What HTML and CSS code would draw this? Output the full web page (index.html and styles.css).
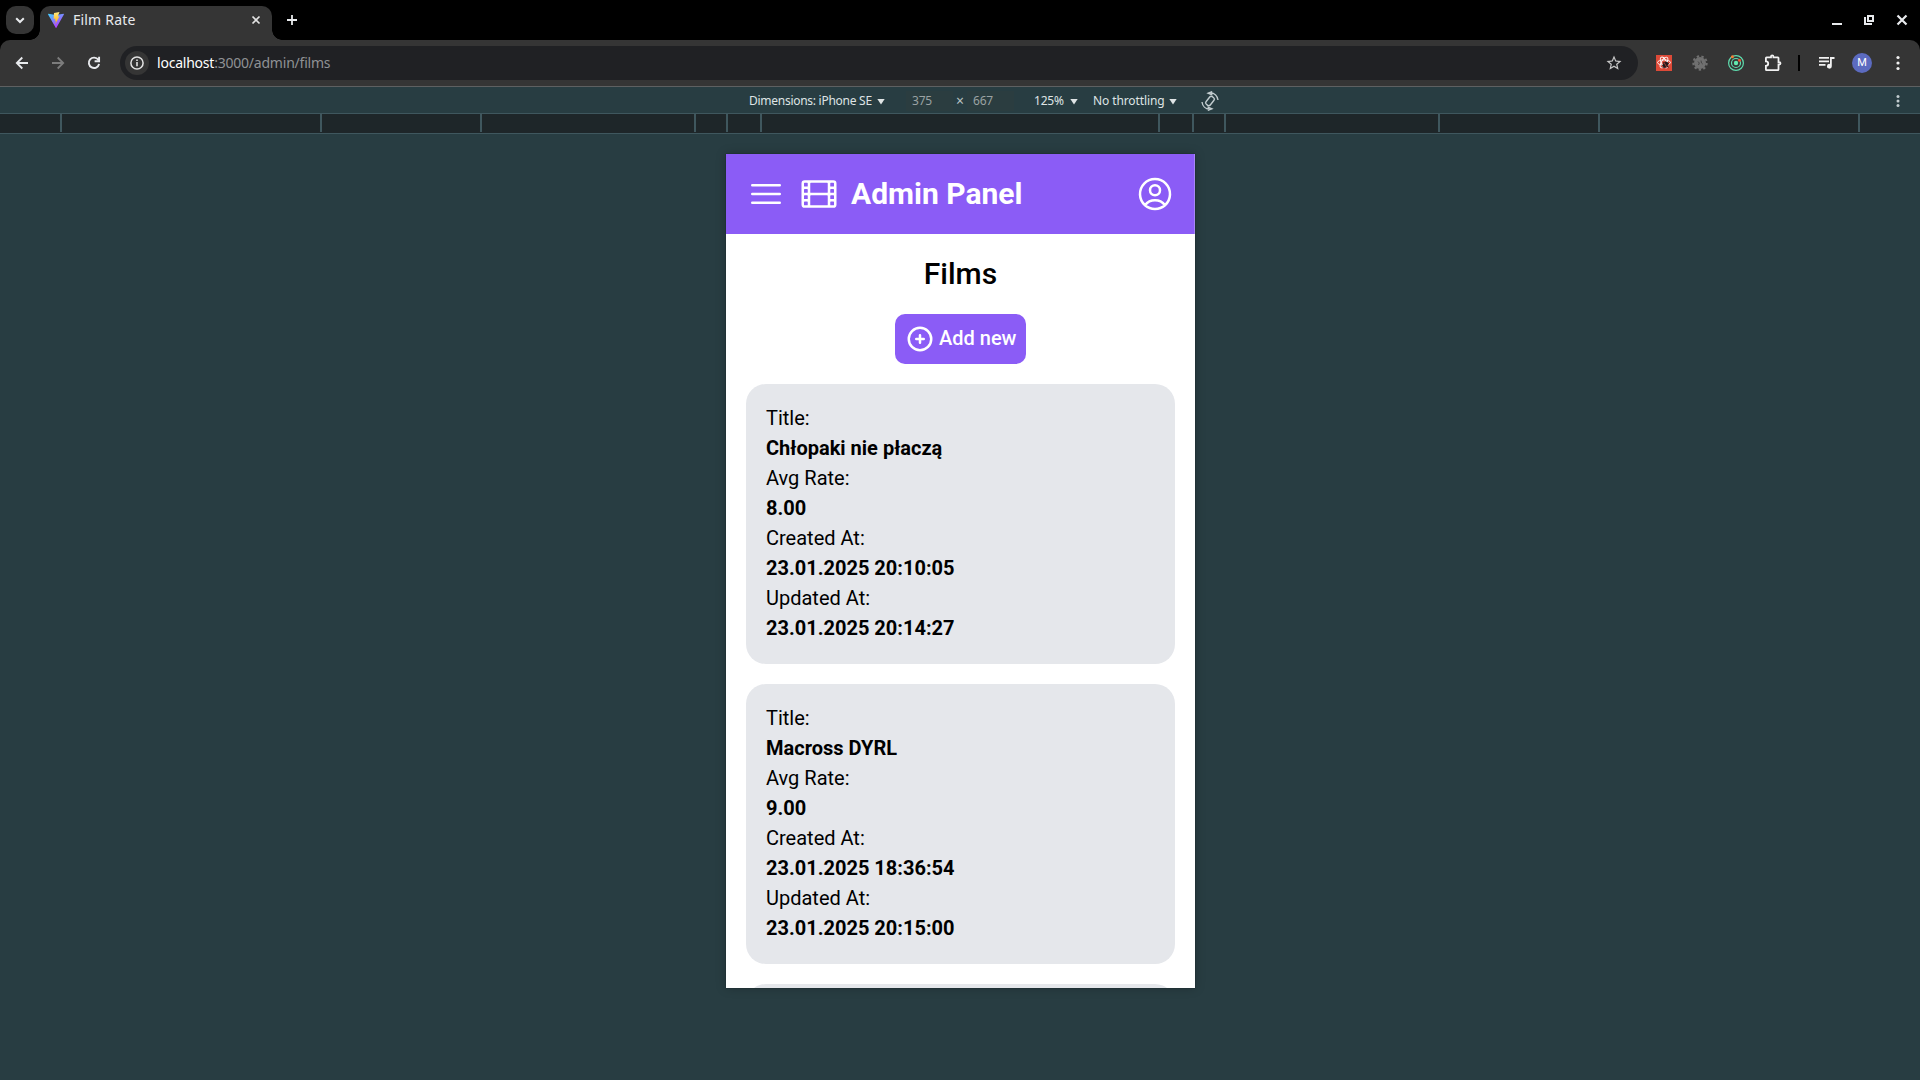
FILE: index.html
```html
<!DOCTYPE html>
<html lang="en">
<head>
<meta charset="utf-8">
<title>Film Rate</title>
<link rel="stylesheet" href="styles.css">
</head>
<body>
<header class="tabstrip">
  <button class="tab-search" aria-label="Search tabs"><svg width="28" height="28" viewBox="0 0 28 28"><path d="M10.2 12.2 14 16l3.800-3.800" fill="none" stroke="#e8eaed" stroke-width="2"/></svg></button>
  <div class="tab">
    <svg class="favicon" width="16" height="16" viewBox="0 0 16 16">
      <defs>
        <linearGradient id="vite" x1="0" y1="0" x2=".6" y2="1"><stop stop-color="#41d1ff"/><stop offset="1" stop-color="#bd34fe"/></linearGradient>
        <linearGradient id="bolt" x1="0" y1="0" x2="0" y2="1"><stop stop-color="#ffea83"/><stop offset="1" stop-color="#ffa800"/></linearGradient>
      </defs>
      <path d="M15.900 2.400 8.400 15.700a.4.4 0 0 1-.7 0L.1 2.400a.4.4 0 0 1 .4-.6L8 3.100l7.500-1.300a.4.400 0 0 1 .4.600z" fill="url(#vite)"/>
      <path d="M11.500 0 6 1.100l-.3 5.800 1.700-.3-.5 2.300 1.100-.3-.7 3.700 4.100-8-1.700.3z" fill="url(#bolt)"/>
    </svg>
    <span class="tab-title">Film Rate</span>
    <svg class="tab-close" width="12" height="12" viewBox="0 0 12 12"><path d="m2.500 2.500 7 7m0-7-7 7" stroke="#e3e3e3" stroke-width="1.700"/></svg>
  </div>
  <svg class="new-tab" width="12" height="12" viewBox="0 0 12 12"><path d="M6 1v10M1 6h10" stroke="#e8eaed" stroke-width="1.800"/></svg>
  <div class="window-controls">
    <svg width="12" height="12" viewBox="0 0 12 12"><path d="M1 10h10" stroke="#e8eaed" stroke-width="2"/></svg>
    <svg width="12" height="12" viewBox="0 0 12 12" fill="none" stroke="#e8eaed" stroke-width="2"><path d="M5 2h5v5H5zM2 3v7h7"/></svg>
    <svg width="12" height="12" viewBox="0 0 12 12"><path d="m1.500 1.500 9 9m0-9-9 9" stroke="#e8eaed" stroke-width="2.200"/></svg>
  </div>
</header>

<div class="toolbar-bed">
<nav class="toolbar">
  <svg class="nav-icon" width="16" height="16" viewBox="0 0 16 16" fill="none" stroke="#e8eaed" stroke-width="1.800"><path d="M14 8H3M8.300 2.500 2.800 8l5.500 5.500"/></svg>
  <svg class="nav-icon" width="16" height="16" viewBox="0 0 16 16" fill="none" stroke="#7c7c7c" stroke-width="1.800"><path d="M2 8h11M7.700 2.500 13.200 8l-5.500 5.500"/></svg>
  <svg class="nav-icon" width="16" height="16" viewBox="0 0 16 16" fill="none" stroke="#e8eaed" stroke-width="1.900"><path d="M12.300 4.800A5.200 5.200 0 1 0 13.100 9M13.100 1.800v4.500H8.600"/></svg>
  <div class="omnibox">
    <span class="site-info"><svg width="16" height="16" viewBox="0 0 16 16" fill="none" stroke="#e3e3e3"><circle cx="8" cy="8" r="6.100" stroke-width="1.500"/><path d="M8 7.100v4.100M8 4.500v1.600" stroke-width="1.600"/></svg></span>
    <span class="url"><b class="host">localhost</b>:3000/admin/films</span>
    <svg class="star" width="18" height="18" viewBox="0 0 24 24" fill="#c7c7c7"><path d="m22 9.240-7.190-.62L12 2 9.190 8.630 2 9.240l5.460 4.730L5.820 21 12 17.270 18.180 21l-1.630-7.030zM12 15.400l-3.760 2.270 1-4.280-3.320-2.880 4.380-.38L12 6.100l1.710 4.040 4.380.38-3.320 2.880 1 4.280z"/></svg>
  </div>
  <div class="extensions">
    <svg width="16" height="16" viewBox="0 0 16 16">
      <path d="M0 0h16v16H0z" fill="#dd4a38"/>
      <g fill="none" stroke="#fff" stroke-width=".9"><ellipse cx="8" cy="7.500" rx="6.500" ry="2.600"/><ellipse cx="8" cy="7.500" rx="6" ry="2.600" transform="rotate(60 8 7.500)"/><ellipse cx="8" cy="7.500" rx="6" ry="2.600" transform="rotate(120 8 7.500)"/></g>
      <ellipse cx="9.500" cy="9.600" rx="2.500" ry="3.200" transform="rotate(35 9.500 9.600)" fill="#271819"/><path d="m6 10.500 7-2M6.500 12.500l6-1M7 7l5.500 5.500" stroke="#271819" stroke-width=".8"/><path d="m8 7.500 2.700 4.500" stroke="#dd4a38" stroke-width=".7"/>
    </svg>
    <svg width="16" height="16" viewBox="0 0 16 16"><circle cx="8" cy="8" r="6" fill="#707070"/><circle cx="8" cy="8" r="6.700" fill="none" stroke="#707070" stroke-width="2" stroke-dasharray="2.400 2.280"/><path d="M6 6.500 7.300 8 6.500 10M9 5.500 9.500 8l1.200 1" fill="none" stroke="#444"/></svg>
    <svg width="16" height="16" viewBox="0 0 16 16"><g fill="none" stroke="#5fdcae" stroke-width="1.200"><circle cx="8" cy="8" r="7.400"/><circle cx="8" cy="8" r="4.500"/></g><circle cx="8" cy="8" r="2.200" fill="#63e8ae"/><circle cx="4.400" cy="1.700" r="1.500" fill="#f47c34"/><circle cx="11.500" cy="5.200" r="1.500" fill="#f0512f"/></svg>
    <svg width="18" height="18" viewBox="0 0 18 18"><path d="M2.500 3.300h4.500V2.500a1.200 1.200 0 0 1 2.400 0v.8h4.500a.6.600 0 0 1 .6.600v4.200h.8a1.200 1.200 0 0 1 0 2.400h-.8v5a.6.600 0 0 1-.6.600H2.500a.6.600 0 0 1-.6-.6v-3.600a2.300 2.300 0 0 0 0-4.600V3.900a.6.600 0 0 1 .6-.6z" fill="none" stroke="#f1f1f1" stroke-width="1.800"/></svg>
  </div>
  <span class="divider"></span>
  <svg class="playlist" width="16" height="14" viewBox="0 0 16 14" fill="#f1f1f1"><path d="M0 1h10v1.700H0zM0 4.500h10v1.700H0zM0 8h6.500v1.700H0zM11 1h4.500v2h-2.700v7.200a2.400 2.400 0 1 1-1.800-2.300z"/></svg>
  <span class="avatar">M</span>
  <svg class="menu-dots" width="4" height="16" viewBox="0 0 4 16" fill="#f1f1f1"><circle cx="2" cy="2.500" r="1.600"/><circle cx="2" cy="8" r="1.600"/><circle cx="2" cy="13.500" r="1.600"/></svg>
</nav>
</div>

<div class="devicebar">
  <span class="device">Dimensions: iPhone SE</span><i class="caret"></i>
  <span class="size width">375</span><span class="times">×</span><span class="size">667</span>
  <span class="zoom">125%</span><i class="caret"></i>
  <span class="throttle">No throttling</span><i class="caret"></i>
  <svg class="rotate" width="20" height="20" viewBox="0 0 20 20" fill="none" stroke="#c2cccf" stroke-width="1.400"><rect x="7.300" y="5.200" width="5.400" height="9.600" rx="1.800" transform="rotate(38 10 10)"/><path d="M10.500 1.700c4 .3 7 3.300 7.500 7.300M9.500 18.300C5.500 18 2.500 15 2 11M8.200 2.200 11.500.9l.2 2.800zM11.800 17.800l-3.300 1.300-.2-2.800z"/></svg>
  <svg class="device-menu" width="4" height="14" viewBox="0 0 4 14" fill="#c2cccf"><circle cx="2" cy="2.500" r="1.500"/><circle cx="2" cy="7" r="1.500"/><circle cx="2" cy="11.500" r="1.500"/></svg>
</div>
<div class="ruler">
  <i class="seg s1"></i><i class="seg s2"></i><i class="seg s3"></i><i class="seg s4"></i><i class="seg s5"></i><i class="seg s6"></i><i class="seg center"></i><i class="seg s6"></i><i class="seg s5"></i><i class="seg s4"></i><i class="seg s3"></i><i class="seg s2"></i>
</div>

<main class="stage">
  <div class="phone">
    <header class="app-header">
      <svg class="icon" viewBox="0 0 24 24"><path d="M3.750 6.750h16.500M3.750 12h16.500m-16.500 5.250h16.500"/></svg>
      <svg class="icon" viewBox="0 0 24 24"><path d="M3.375 19.500h17.250m-17.250 0a1.125 1.125 0 0 1-1.125-1.125M3.375 19.500h1.500C5.496 19.500 6 18.996 6 18.375m-3.750 0V5.625m0 12.750v-1.500c0-.621.504-1.125 1.125-1.125m18.375 2.625V5.625m0 12.750c0 .621-.504 1.125-1.125 1.125m1.125-1.125v-1.500c0-.621-.504-1.125-1.125-1.125m0 3.750h-1.500A1.125 1.125 0 0 1 18 18.375M20.625 4.500H3.375m17.250 0c.621 0 1.125.504 1.125 1.125M20.625 4.500h-1.500C18.504 4.500 18 5.004 18 5.625m3.750 0v1.500c0 .621-.504 1.125-1.125 1.125M3.375 4.500c-.621 0-1.125.504-1.125 1.125M3.375 4.500h1.500C5.496 4.500 6 5.004 6 5.625m-3.750 0v1.500c0 .621.504 1.125 1.125 1.125m0 0h1.500m-1.500 0c-.621 0-1.125.504-1.125 1.125v1.500c0 .621.504 1.125 1.125 1.125m1.500-3.750C5.496 8.250 6 7.746 6 7.125v-1.500M4.875 8.250C5.496 8.250 6 8.754 6 9.375v1.500m0-5.250v5.250m0-5.250C6 5.004 6.504 4.500 7.125 4.500h9.750c.621 0 1.125.504 1.125 1.125m1.125 2.625h1.500m-1.500 0A1.125 1.125 0 0 1 18 7.125v-1.500m1.125 2.625c-.621 0-1.125.504-1.125 1.125v1.500m2.625-2.625c.621 0 1.125.504 1.125 1.125v1.500c0 .621-.504 1.125-1.125 1.125M18 5.625v5.250M7.125 12h9.750m-9.750 0A1.125 1.125 0 0 1 6 10.875M7.125 12C6.504 12 6 12.504 6 13.125m0-2.250C6 11.496 5.496 12 4.875 12M18 10.875c0 .621-.504 1.125-1.125 1.125M18 10.875c0 .621.504 1.125 1.125 1.125m-2.250 0c.621 0 1.125.504 1.125 1.125m-12 5.250v-5.250m0 5.250c0 .621.504 1.125 1.125 1.125h9.750c.621 0 1.125-.504 1.125-1.125m-12 0v-1.500c0-.621-.504-1.125-1.125-1.125M18 18.375v-5.250m0 5.250v-1.500c0-.621.504-1.125 1.125-1.125M18 13.125v1.500c0 .621.504 1.125 1.125 1.125M18 13.125c0-.621.504-1.125 1.125-1.125M6 13.125v1.500c0 .621-.504 1.125-1.125 1.125M6 13.125C6 12.504 5.496 12 4.875 12m-1.500 0h1.500m-1.500 0c-.621 0-1.125.504-1.125 1.125v1.500c0 .621.504 1.125 1.125 1.125M19.125 12h1.500m0 0c.621 0 1.125.504 1.125 1.125v1.500c0 .621-.504 1.125-1.125 1.125m-17.250 0h1.500m14.250 0h1.500"/></svg>
      <span class="brand">Admin Panel</span>
      <svg class="icon user" viewBox="0 0 24 24"><path d="M17.982 18.725A7.488 7.488 0 0 0 12 15.750a7.488 7.488 0 0 0-5.982 2.975m11.963 0a9 9 0 1 0-11.963 0m11.963 0A8.966 8.966 0 0 1 12 21a8.966 8.966 0 0 1-5.982-2.275M15 9.750a3 3 0 1 1-6 0 3 3 0 0 1 6 0Z"/></svg>
    </header>
    <h1 class="page-title">Films</h1>
    <button class="add"><svg class="add-icon" viewBox="0 0 24 24"><circle cx="12" cy="12" r="9"/><path d="M12 9v6m3-3H9"/></svg><span class="add-label">Add new</span></button>
    <section class="cards">
      <dl class="card">
        <dt>Title:</dt><dd>Chłopaki nie płaczą</dd>
        <dt>Avg Rate:</dt><dd>8.00</dd>
        <dt>Created At:</dt><dd>23.01.2025 20:10:05</dd>
        <dt>Updated At:</dt><dd>23.01.2025 20:14:27</dd>
      </dl>
      <dl class="card">
        <dt>Title:</dt><dd>Macross DYRL</dd>
        <dt>Avg Rate:</dt><dd>9.00</dd>
        <dt>Created At:</dt><dd>23.01.2025 18:36:54</dd>
        <dt>Updated At:</dt><dd>23.01.2025 20:15:00</dd>
      </dl>
      <div class="card"></div>
    </section>
  </div>
</main>
</body>
</html>
```
FILE: styles.css
```css
* { box-sizing: border-box; }
body { margin: 0; width: 1920px; height: 1080px; overflow: hidden; display: flex; flex-direction: column; background: #283d42; font-family: "Noto Sans", "Open Sans", sans-serif; }
svg { display: block; flex: none; }
button { border: 0; padding: 0; font: inherit; color: inherit; }

.tabstrip { height: 40px; flex: none; background: #000; display: flex; align-items: flex-start; padding: 6px 12px 0 6px; }
.tab-search { width: 28px; height: 28px; border-radius: 10px; background: #353535; }
.tab { width: 232px; height: 34px; margin-left: 6px; background: #353535; border-radius: 10px 10px 0 0; display: flex; align-items: center; padding: 0 10px 7px 8px; position: relative; }
.tab::before, .tab::after { content: ""; position: absolute; bottom: 0; width: 10px; height: 10px; }
.tab::before { left: -10px; background: radial-gradient(circle at 0 0, transparent 9.500px, #353535 10px); }
.tab::after { right: -10px; background: radial-gradient(circle at 100% 0, transparent 9.500px, #353535 10px); }
.tab-title { margin-left: 9px; font-size: 14px; line-height: 20px; color: #e8eaed; letter-spacing: .2px; }
.tab-close { margin-left: auto; }
.new-tab { margin: 8px 0 0 14px; }
.window-controls { margin: 8px 0 0 auto; display: flex; gap: 20px; }
.window-controls svg:last-child { margin-left: 1px; }

.toolbar-bed { height: 47px; flex: none; background: #000; }
.toolbar { height: 47px; background: #353535; border-bottom: 1px solid #5e6061; border-radius: 10px 10px 0 0; display: flex; align-items: center; padding: 0 20px 0 14px; }
.nav-icon { margin-right: 20px; }
.omnibox { width: 1518px; height: 34px; margin-left: -2px; border-radius: 17px; background: #202124; display: flex; align-items: center; padding: 0 15px 0 5px; }
.site-info { width: 24px; height: 24px; border-radius: 50%; background: #353535; display: flex; align-items: center; justify-content: center; }
.url { margin-left: 8px; color: #8f9194; font-size: 14px; line-height: 20px; letter-spacing: -.22px; }
.host { font-weight: 400; color: #fff; }
.star { margin-left: auto; }
.extensions { display: flex; align-items: center; gap: 20px; margin-left: 18px; }
.divider { width: 2px; height: 16px; margin-left: 16px; background: #000; }
.playlist { margin-left: 19px; }
.avatar { width: 20px; height: 20px; margin-left: 17px; border-radius: 50%; background: #5c6bc0; color: #fff; font: 11px/20px Roboto, sans-serif; text-align: center; }
.menu-dots { margin-left: auto; }

.devicebar { height: 26px; flex: none; display: flex; align-items: center; padding: 1px 20px 0 749px; color: #dfe4e5; font-size: 12px; line-height: 16px; white-space: nowrap; }
.device { width: 123px; letter-spacing: -.27px; }
.caret { width: 8px; height: 6px; margin: 2px 0 0 5px; background: #dfe4e5; clip-path: polygon(0 0, 100% 0, 50% 100%); }
.size { width: 47px; height: 20px; line-height: 20px; padding-left: 6px; background: #2b3d40; color: #9aa2a3; letter-spacing: -.2px; }
.width { margin-left: 21px; }
.times { width: 14px; text-align: center; color: #b9c2c4; font-size: 14px; }
.zoom { width: 31px; margin-left: 20px; letter-spacing: -.2px; }
.throttle { width: 71px; margin-left: 15px; letter-spacing: -.1px; }
.rotate { margin-left: 23px; }
.device-menu { margin-left: auto; }

.ruler { height: 21px; flex: none; border: 1px solid #3f575e; border-width: 1px 0; background: #1e2629; display: flex; }
.seg { height: 18px; border-right: 2px solid #3f575e; }
.s1 { width: 62px; }
.s2 { width: 260px; }
.s3 { width: 160px; }
.s4 { width: 214px; }
.s5 { width: 32px; }
.s6 { width: 34px; }
.center { width: 398px; }

.stage { flex: 1; display: flex; justify-content: center; align-items: flex-start; padding-top: 20px; padding-left: 1px; }
.phone { width: 469px; height: 834px; background: #fff; color: #000; overflow: hidden; box-shadow: 0 0 10px rgba(0, 0, 0, .22), 0 0 1px rgba(0, 0, 0, .5); display: flex; flex-direction: column; align-items: center; font-family: Roboto, sans-serif; }
.app-header { width: 469px; height: 80px; flex: none; background: #8b5cf6; border-right: 1px solid #a885f8; display: flex; align-items: center; gap: 12.500px; padding: 0 19px 0 20px; color: #fff; }
.icon { width: 40px; height: 40px; fill: none; stroke: #fff; stroke-width: 1.500; stroke-linecap: round; stroke-linejoin: round; }
.brand { font-size: 30px; line-height: 40px; font-weight: 700; }
.user { margin-left: auto; }
.page-title { flex: none; margin: 20px 0; font-size: 30px; line-height: 40px; font-weight: 500; }
.add { width: 131px; height: 50px; flex: none; display: flex; align-items: center; gap: 4px; padding: 0 0 0 10px; border-radius: 10px; background: #8b5cf6; color: #fff; font: 500 20px/30px Roboto, sans-serif; white-space: nowrap; }
.add-icon { width: 30px; height: 30px; fill: none; stroke: #fff; stroke-width: 2; stroke-linecap: round; }
.add-label { padding-bottom: 2px; }
.cards { width: 429px; flex: none; margin-top: 20px; display: flex; flex-direction: column; gap: 20px; }
.card { margin: 0; height: 280px; flex: none; padding: 19px 20px 21px; border-radius: 20px; background: #e5e7eb; font-size: 20px; line-height: 30px; }
.card dd { margin: 0; font-weight: 700; }
```
